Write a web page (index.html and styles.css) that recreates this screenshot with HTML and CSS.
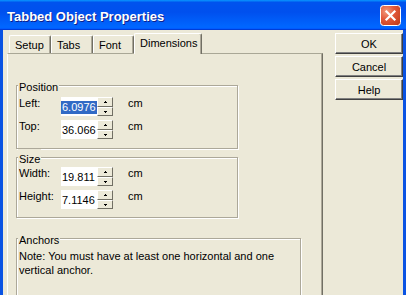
FILE: index.html
```html
<!DOCTYPE html>
<html>
<head>
<meta charset="utf-8">
<link rel="stylesheet" href="styles.css">
</head>
<body>
<div class="window">
  <div class="titlebar">
    <span class="title">Tabbed Object Properties</span>
    <span class="close">
      <svg width="21" height="21" viewBox="0 0 21 21">
        <defs>
          <radialGradient id="cg" cx="0.3" cy="0.3" r="0.9">
            <stop offset="0" stop-color="#f29a7c"/>
            <stop offset="0.45" stop-color="#e2583a"/>
            <stop offset="1" stop-color="#c13b18"/>
          </radialGradient>
        </defs>
        <rect x="0.5" y="0.5" width="20" height="20" rx="3" fill="url(#cg)" stroke="#ffffff"/>
        <path d="M6.5 6.5 L14.5 14.5 M14.5 6.5 L6.5 14.5" stroke="#ffffff" stroke-width="2.2" stroke-linecap="square"/>
      </svg>
    </span>
  </div>
  <div class="client">
    <div class="tabs-col">
      <div class="tabstrip">
        <div class="tab t-setup">Setup</div>
        <div class="tab t-tabs">Tabs</div>
        <div class="tab t-font">Font</div>
        <div class="tab t-dim active">Dimensions</div>
      </div>
      <div class="panel">
        <fieldset class="group group-pos">
          <legend>Position</legend>
          <div class="rows rows-pos">
            <div class="row">
              <span class="lbl">Left:</span>
              <div class="spin">
                <div class="edit"><span class="sel">6.0976</span></div>
                <div class="spinbtns">
                  <span class="sb sb-up"><svg width="3" height="2" shape-rendering="crispEdges"><rect x="1" y="0" width="1" height="1"/><rect x="0" y="1" width="3" height="1"/></svg></span>
                  <span class="sb sb-down"><svg width="3" height="2" shape-rendering="crispEdges"><rect x="0" y="0" width="3" height="1"/><rect x="1" y="1" width="1" height="1"/></svg></span>
                </div>
              </div>
              <span class="unit">cm</span>
            </div>
            <div class="row">
              <span class="lbl">Top:</span>
              <div class="spin">
                <div class="edit">36.066</div>
                <div class="spinbtns">
                  <span class="sb sb-up"><svg width="3" height="2" shape-rendering="crispEdges"><rect x="1" y="0" width="1" height="1"/><rect x="0" y="1" width="3" height="1"/></svg></span>
                  <span class="sb sb-down"><svg width="3" height="2" shape-rendering="crispEdges"><rect x="0" y="0" width="3" height="1"/><rect x="1" y="1" width="1" height="1"/></svg></span>
                </div>
              </div>
              <span class="unit">cm</span>
            </div>
          </div>
        </fieldset>
        <fieldset class="group group-size">
          <legend>Size</legend>
          <div class="rows rows-size">
            <div class="row">
              <span class="lbl">Width:</span>
              <div class="spin">
                <div class="edit">19.811</div>
                <div class="spinbtns">
                  <span class="sb sb-up"><svg width="3" height="2" shape-rendering="crispEdges"><rect x="1" y="0" width="1" height="1"/><rect x="0" y="1" width="3" height="1"/></svg></span>
                  <span class="sb sb-down"><svg width="3" height="2" shape-rendering="crispEdges"><rect x="0" y="0" width="3" height="1"/><rect x="1" y="1" width="1" height="1"/></svg></span>
                </div>
              </div>
              <span class="unit">cm</span>
            </div>
            <div class="row">
              <span class="lbl">Height:</span>
              <div class="spin">
                <div class="edit">7.1146</div>
                <div class="spinbtns">
                  <span class="sb sb-up"><svg width="3" height="2" shape-rendering="crispEdges"><rect x="1" y="0" width="1" height="1"/><rect x="0" y="1" width="3" height="1"/></svg></span>
                  <span class="sb sb-down"><svg width="3" height="2" shape-rendering="crispEdges"><rect x="0" y="0" width="3" height="1"/><rect x="1" y="1" width="1" height="1"/></svg></span>
                </div>
              </div>
              <span class="unit">cm</span>
            </div>
          </div>
        </fieldset>
        <fieldset class="group group-anchors">
          <legend>Anchors</legend>
          <p class="note">Note: You must have at least one horizontal and one vertical anchor.</p>
        </fieldset>
      </div>
    </div>
    <div class="buttons">
      <button class="btn">OK</button>
      <button class="btn">Cancel</button>
      <button class="btn">Help</button>
    </div>
  </div>
</div>
</body>
</html>
```
FILE: styles.css
```css
html, body {
  margin: 0;
  padding: 0;
}
body {
  width: 406px;
  height: 295px;
  overflow: hidden;
  background: #ece9d8;
  font-family: "Liberation Sans", Arial, sans-serif;
  font-size: 11px;
  color: #000;
}
.window {
  width: 406px;
  height: 295px;
  overflow: hidden;
  display: flex;
  flex-direction: column;
}
.titlebar {
  flex: none;
  height: 30px;
  box-sizing: border-box;
  display: flex;
  align-items: center;
  justify-content: space-between;
  padding: 0 5px 0 7px;
  background: linear-gradient(180deg, #0997ff 0, #0053ee 8%, #0050ee 40%, #0066ff 88%, #0066ff 93%, #005bff 95%, #003dd7 96%, #003dd7 100%);
}
.title {
  font-family: "Liberation Sans", Arial, sans-serif;
  font-weight: bold;
  font-size: 13px;
  line-height: 15px;
  padding-top: 3px;
  color: #fff;
  text-shadow: 1px 1px #0f1f8a;
}
.close {
  display: block;
  width: 21px;
  height: 21px;
}
.close svg {
  display: block;
}
.client {
  flex: 1;
  min-height: 0;
  overflow: hidden;
  display: flex;
  gap: 12px;
  padding: 3px 0 0 4px;
  border-left: 3px solid #0a53e3;
  border-right: 3px solid #0a53e3;
}
.tabs-col {
  flex: none;
  width: 316px;
  display: flex;
  flex-direction: column;
}
.tabstrip {
  height: 21px;
  margin-bottom: -1px;
  display: flex;
  align-items: flex-start;
  padding-left: 2px;
  position: relative;
  z-index: 1;
}
.tab {
  box-sizing: border-box;
  height: 18px;
  margin-top: 2px;
  padding: 3px 0 0 5px;
  line-height: 13px;
  white-space: nowrap;
  background: #ece9d8;
  border-top: 1px solid #fff;
  border-left: 1px solid #fff;
  border-right: 1px solid #716f64;
  box-shadow: inset -1px 0 #aca899;
  border-radius: 2px 2px 0 0;
}
.t-setup { width: 42px; padding-left: 5px; }
.t-tabs { width: 42px; }
.t-font { width: 41px; }
.t-dim { width: 68px; }
.tab.active {
  height: 21px;
  margin-top: 0;
  padding-top: 3px;
  padding-left: 5px;
  border-top: 1px solid #fff;
}
.panel {
  flex: 1;
  min-height: 0;
  overflow: hidden;
  box-sizing: border-box;
  border-top: 1px solid #a9a796;
  border-left: 1px solid #fff;
  border-right: 1px solid #716f64;
  box-shadow: inset -1px 0 #aca899;
  padding: 0 0 0 8px;
}
.group {
  margin: 0;
  padding: 0 0 0 2px;
  border: 1px solid #aca899;
  box-shadow: inset 1px 1px #fff, 1px 1px #fff;
  min-width: 0;
  box-sizing: border-box;
}
.group legend {
  padding: 4px 1px 0;
  margin-left: -1px;
  line-height: 13px;
  background: #ece9d8;
}
.group-pos {
  width: 222px;
  margin-top: 23px;
  padding-bottom: 9px;
}
.group-size {
  width: 222px;
  margin-top: 0;
  padding-bottom: 8px;
}
.group-anchors {
  width: 285px;
  margin-top: 12px;
  padding-bottom: 18px;
}
.rows {
  display: flex;
  flex-direction: column;
  gap: 4px;
}
.rows-pos { padding-top: 3px; }
.rows-size { padding-top: 1px; }
.row {
  display: flex;
  align-items: flex-start;
  height: 19px;
}
.lbl {
  width: 42px;
  line-height: 13px;
}
.spin {
  display: flex;
  height: 19px;
}
.edit {
  box-sizing: border-box;
  width: 36px;
  height: 19px;
  background: #fff;
  overflow: hidden;
  white-space: nowrap;
  padding: 4px 0 0 1px;
  line-height: 13px;
}
.sel {
  display: inline-block;
  background: #316ac5;
  color: #fff;
  margin-left: -1px;
  padding: 0 1px 0 1px;
  line-height: 13px;
}
.spinbtns {
  width: 16px;
  display: flex;
  flex-direction: column;
}
.sb {
  box-sizing: border-box;
  display: flex;
  align-items: center;
  justify-content: center;
  background: #ece9d8;
  border-top: 1px solid #fff;
  border-left: 1px solid #fff;
  border-right: 1px solid #716f64;
  border-bottom: 1px solid #716f64;
}
.sb-up { height: 10px; }
.sb-down { height: 9px; }
.sb svg {
  display: block;
  fill: #000;
}
.unit {
  margin-left: 15px;
  line-height: 13px;
}
.note {
  margin: 0;
  padding-top: 2px;
  line-height: 14px;
}
.buttons {
  flex: none;
  width: 68px;
  display: flex;
  flex-direction: column;
  gap: 2px;
}
.btn {
  box-sizing: border-box;
  height: 21px;
  width: 68px;
  margin: 0;
  padding: 0;
  font-family: "Liberation Sans", Arial, sans-serif;
  font-size: 11px;
  color: #000;
  background: #ece9d8;
  border: 1px solid;
  border-color: #fff #404040 #404040 #fff;
  box-shadow: inset -1px -1px #808080;
}
```
